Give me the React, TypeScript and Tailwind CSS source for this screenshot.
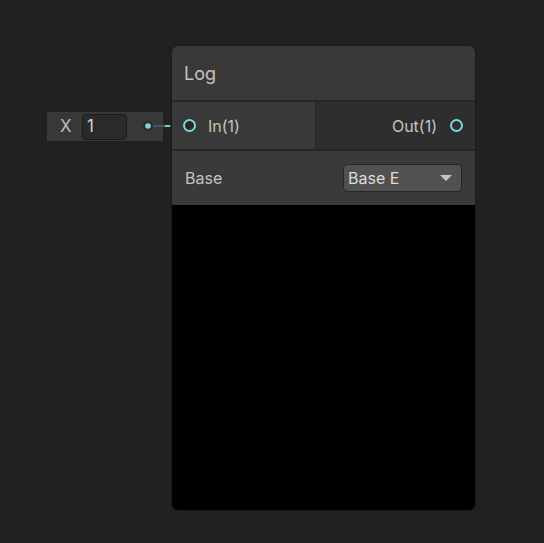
export default function App() {
  return (
    <div
      className="relative h-[543px] w-[544px] overflow-hidden bg-[#212121] text-[#c4c4c4]"
      style={{ fontFamily: 'Inter, "Noto Sans", sans-serif' }}
    >
      {/* X inline value node */}
      <div className="absolute left-[47px] top-[112px] flex h-[29px] w-[116px] items-center bg-[#383838]">
        <span className="ml-[13px] w-[20px] text-[17px] text-[#bdbdbd]">X</span>
        <div className="ml-[2px] flex h-[26px] w-[45px] items-center rounded-[4px] border border-[#1c1c1c] bg-[#2a2a2a] pl-[4px] text-[17px] text-[#d2d2d2]">
          1
        </div>
      </div>

      {/* edge */}
      <svg className="absolute left-[140px] top-[116px]" width="60" height="20">
        <circle cx="8" cy="10" r="5" fill="#2a2a2a" />
        <circle cx="8" cy="10" r="2.8" fill="#7ad7dd" />
        <line x1="13" y1="10" x2="44" y2="10" stroke="#405b5e" strokeWidth="2" />
        <line x1="25" y1="10" x2="30" y2="10" stroke="#74cdd3" strokeWidth="2" />
      </svg>

      {/* Log node */}
      <div className="absolute left-[171px] top-[45px] flex h-[466px] w-[305px] flex-col overflow-hidden rounded-[7px] border border-[#1a1a1a]">
        <div className="flex h-[54px] items-center bg-[#393939] pl-[12px] text-[18px]">Log</div>
        <div className="h-[2px] bg-[#262626]" />
        <div className="flex h-[47px]">
          <div className="flex w-[144px] items-center border-r border-[#262626] bg-[#393939] pl-[11px]">
            <span className="h-[13px] w-[13px] rounded-full border-2 border-[#7ad7dd] bg-[#262626]" />
            <span className="ml-[12px] text-[16px]">In(1)</span>
          </div>
          <div className="flex flex-1 items-center justify-end bg-[#2e2e2e] pr-[12px]">
            <span className="text-[16px]">Out(1)</span>
            <span className="ml-[13px] h-[13px] w-[13px] rounded-full border-2 border-[#7ad7dd] bg-[#2e2e2e]" />
          </div>
        </div>
        <div className="h-[2px] bg-[#262626]" />
        <div className="flex h-[54px] items-center justify-between bg-[#3a3a3a] pl-[13px] pr-[13px]">
          <span className="text-[16px]">Base</span>
          <div className="flex h-[28px] w-[119px] items-center justify-between rounded-[4px] border border-[#262626] bg-[#515151] pl-[4px] pr-[9px] text-[16px] text-[#dcdcdc]">
            <span>Base E</span>
            <svg width="12" height="8" viewBox="0 0 12 8">
              <path d="M0 1 L12 1 L6 7 Z" fill="#c4c4c4" />
            </svg>
          </div>
        </div>
        <div className="flex-1 bg-black" />
      </div>
    </div>
  );
}
